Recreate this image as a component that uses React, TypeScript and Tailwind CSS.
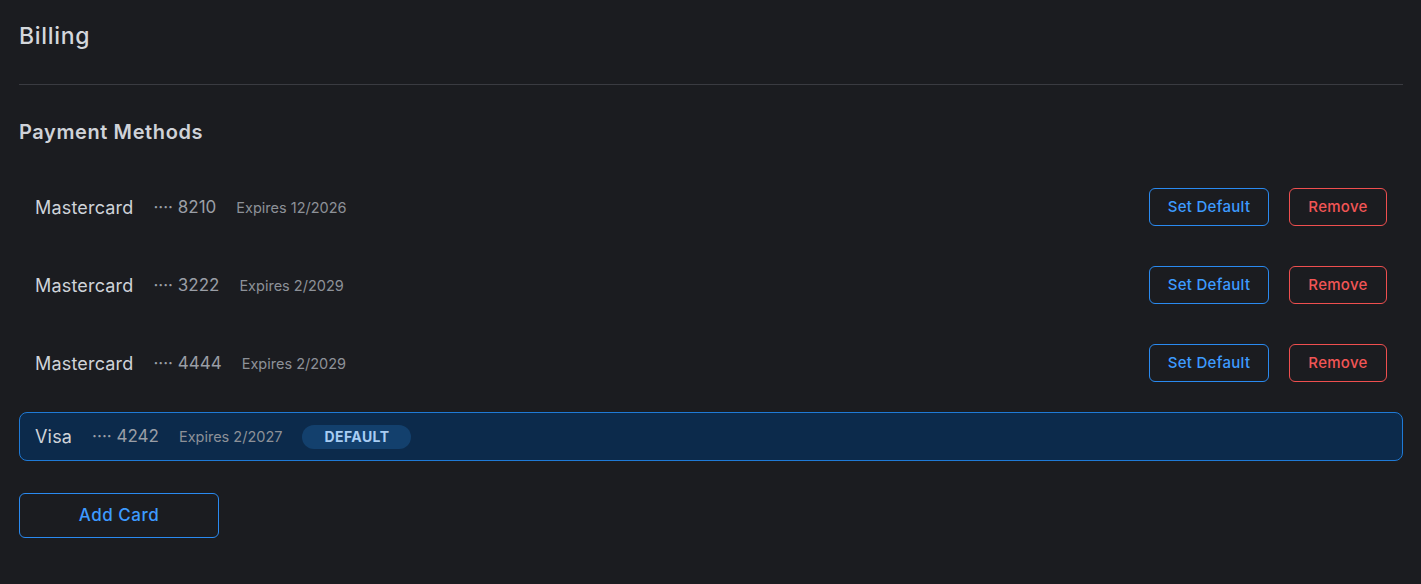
import React from "react";

interface Card {
  id: number;
  brand: string;
  last4: string;
  expires: string;
  isDefault?: boolean;
}

const cards: Card[] = [
  { id: 1, brand: "Mastercard", last4: "8210", expires: "12/2026" },
  { id: 2, brand: "Mastercard", last4: "3222", expires: "2/2029" },
  { id: 3, brand: "Mastercard", last4: "4444", expires: "2/2029" },
  { id: 4, brand: "Visa", last4: "4242", expires: "2/2027", isDefault: true },
];

const CardInfo: React.FC<{ card: Card }> = ({ card }) => (
  <>
    <span className="text-[18px] tracking-[0.01em] text-[#cfd3d9]">{card.brand}</span>
    <span className="text-[17px] text-[#9a9ea6]">···· {card.last4}</span>
    <span className="text-[14.5px] text-[#8d9198]">Expires {card.expires}</span>
  </>
);

const CardRow: React.FC<{ card: Card }> = ({ card }) => {
  if (card.isDefault) {
    return (
      <div className="flex h-[49px] items-center gap-5 rounded-lg border border-[#1f7ad6] bg-[#0c2a4b] pl-[15px] pr-4">
        <CardInfo card={card} />
        <span className="flex h-6 w-[109px] items-center justify-center rounded-full bg-[#13406d] text-[14px] font-bold tracking-[0.03em] text-[#a8cdf3]">
          DEFAULT
        </span>
      </div>
    );
  }
  return (
    <div className="flex h-[58px] items-center rounded-lg border border-transparent pl-[15px] pr-[15px]">
      <div className="flex flex-1 items-center gap-5 pt-px">
        <CardInfo card={card} />
      </div>
      <div className="flex items-center gap-5">
        <button className="h-[38px] w-[120px] rounded-md border border-[#2a8af0] text-[15px] font-medium tracking-[0.02em] text-[#3d9bff]">
          Set Default
        </button>
        <button className="h-[38px] w-[98px] rounded-md border border-[#ef4f4f] text-[15px] font-medium tracking-[0.02em] text-[#f25555]">
          Remove
        </button>
      </div>
    </div>
  );
};

const App: React.FC = () => {
  return (
    <div
      className="min-h-screen w-full bg-[#1b1c20] pl-[19px] pr-[18px] pt-[22px]"
      style={{ fontFamily: "Inter, 'Noto Sans', sans-serif" }}
    >
      <h1 className="text-[23px] font-medium leading-7 tracking-[0.03em] text-[#d4d7dc]">Billing</h1>
      <div className="mt-[34px] h-px bg-[#3a3b41]" />
      <h2 className="mt-[35px] text-[20px] font-semibold leading-6 tracking-[0.03em] text-[#cfd2d8]">
        Payment Methods
      </h2>
      <div className="mt-[34px] flex flex-col gap-5">
        {cards.map((card) => (
          <CardRow key={card.id} card={card} />
        ))}
      </div>
      <button className="mt-8 h-[45px] w-[200px] rounded-md border border-[#2a8af0] text-[17px] font-medium tracking-[0.03em] text-[#3d9bff]">
        Add Card
      </button>
    </div>
  );
};

export default App;
